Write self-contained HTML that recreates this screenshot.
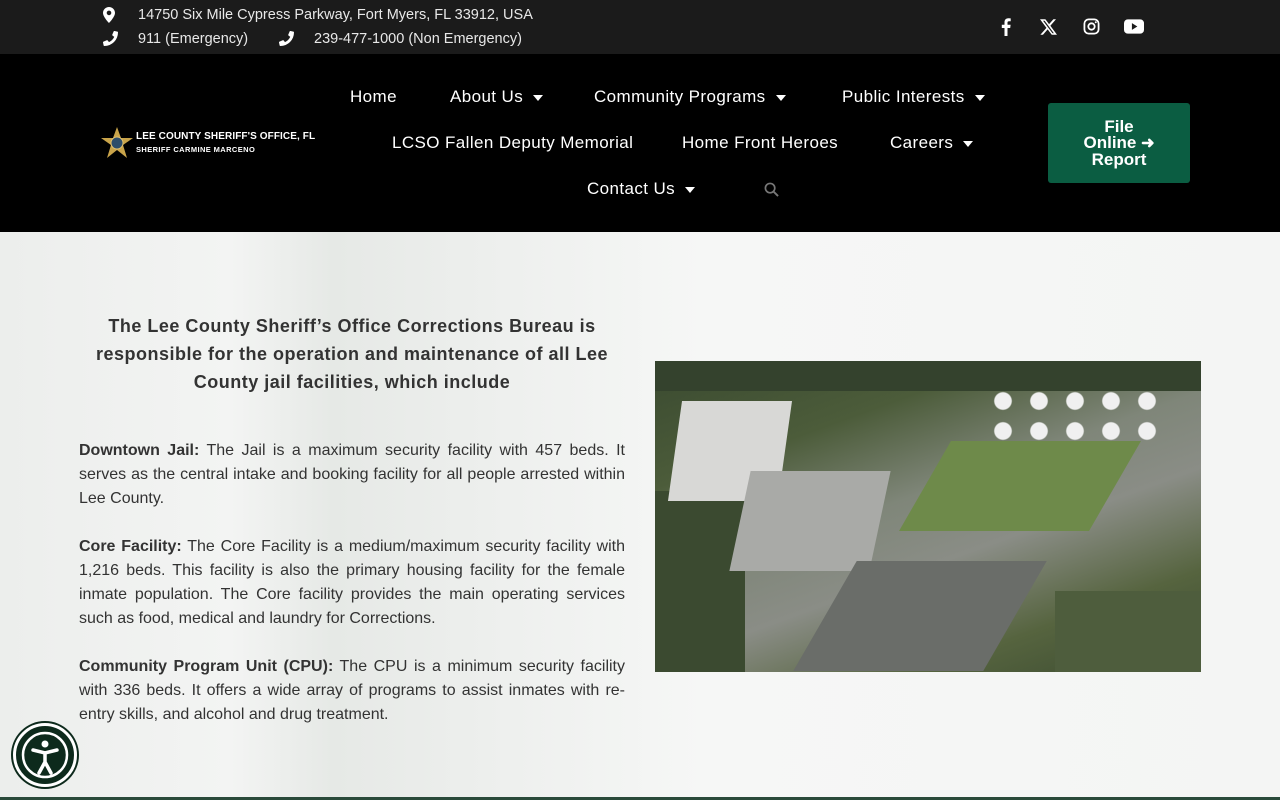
<!DOCTYPE html>
<html><head><meta charset="utf-8"><style>
*{margin:0;padding:0;box-sizing:border-box}
body{width:1280px;height:800px;overflow:hidden;font-family:"Liberation Sans",Arial,sans-serif;background:#f4f5f4;position:relative}
.top{position:absolute;left:0;top:0;width:1280px;height:54px;background:#1b1b1b;color:#e8e8e8;font-size:14.5px}
.top .t{position:absolute;white-space:nowrap}
.nav{position:absolute;left:0;top:54px;width:1280px;height:178px;background:#000;color:#fff;font-size:17px;letter-spacing:.4px}
.nav .i{position:absolute;white-space:nowrap}
.car{display:inline-block;width:0;height:0;border-left:5px solid transparent;border-right:5px solid transparent;border-top:6px solid #fff;margin-left:10px;vertical-align:middle}
.btn{position:absolute;left:1048px;top:103px;width:142px;height:80px;background:#0b5d42;border-radius:3px;color:#fff;font-size:17px;font-weight:bold;line-height:16px;text-align:center;padding-top:16px}
.bg{position:absolute;left:0;top:232px;width:1280px;height:568px;background:linear-gradient(90deg,#eceeec 0%,#f3f4f3 18%,#e6e9e6 26%,#eceeec 36%,#f6f7f6 55%,#f4f5f4 100%)}
h2{position:absolute;left:79px;top:312px;width:546px;text-align:center;font-size:18px;font-weight:bold;line-height:28px;color:#333;letter-spacing:.5px}
.p{position:absolute;left:79px;width:546px;font-size:16px;line-height:24px;color:#333;text-align:justify}
.photo{position:absolute;left:655px;top:361px;width:546px;height:311px;background:linear-gradient(160deg,#3a4a30 0%,#4c5c3a 25%,#7f8679 45%,#8a8d86 60%,#56643f 80%,#3a4a30 100%);overflow:hidden}
.acc{position:absolute;left:13px;top:723px;width:64px;height:64px;border-radius:50%;background:#0d2a1c;border:3px solid #fff;box-shadow:0 0 0 2px #0d2a1c}
</style></head><body>
<div class="top">
<svg style="position:absolute;left:103px;top:7px" width="12" height="16" viewBox="0 0 12 16"><path d="M6 0C2.7 0 0 2.6 0 5.9 0 10 6 16 6 16s6-6 6-10.1C12 2.6 9.3 0 6 0zm0 8.2A2.3 2.3 0 1 1 6 3.6a2.3 2.3 0 0 1 0 4.6z" fill="#fff"/></svg>
<div class="t" style="left:138px;top:7px">14750 Six Mile Cypress Parkway, Fort Myers, FL 33912, USA</div>
<svg style="position:absolute;left:103px;top:31px" width="15" height="15" viewBox="0 0 16 16"><path d="M15.5 11.3l-3.5-1.5a.8.8 0 0 0-.9.2l-1.5 1.9A11.6 11.6 0 0 1 4 6.3l1.9-1.5a.8.8 0 0 0 .2-.9L4.6.4A.8.8 0 0 0 3.7 0L.6.7A.8.8 0 0 0 0 1.5 14.5 14.5 0 0 0 14.5 16a.8.8 0 0 0 .8-.6l.7-3.2a.8.8 0 0 0-.5-.9z" fill="#fff" transform="scale(-1,1) translate(-16,0)"/></svg>
<div class="t" style="left:138px;top:31px">911 (Emergency)</div>
<svg style="position:absolute;left:279px;top:31px" width="15" height="15" viewBox="0 0 16 16"><path d="M15.5 11.3l-3.5-1.5a.8.8 0 0 0-.9.2l-1.5 1.9A11.6 11.6 0 0 1 4 6.3l1.9-1.5a.8.8 0 0 0 .2-.9L4.6.4A.8.8 0 0 0 3.7 0L.6.7A.8.8 0 0 0 0 1.5 14.5 14.5 0 0 0 14.5 16a.8.8 0 0 0 .8-.6l.7-3.2a.8.8 0 0 0-.5-.9z" fill="#fff" transform="scale(-1,1) translate(-16,0)"/></svg>
<div class="t" style="left:314px;top:31px">239-477-1000 (Non Emergency)</div>
<svg style="position:absolute;left:1000px;top:18px" width="12" height="18" viewBox="0 0 10 18"><path d="M6.5 18V10h2.7l.4-3.2H6.5V4.8c0-.9.3-1.5 1.6-1.5H9.7V.4A21 21 0 0 0 7.4.3C5.1.3 3.5 1.7 3.5 4.3v2.5H.8V10h2.7v8z" fill="#fff"/></svg>
<svg style="position:absolute;left:1040px;top:19px" width="17" height="16" viewBox="0 0 24 22"><path d="M18.9 0h3.7l-8 9.2L24 22h-7.4l-5.8-7.6L4.2 22H.5l8.6-9.8L0 0h7.6l5.2 6.9zm-1.3 19.8h2L6.5 2.1H4.3z" fill="#fff"/></svg>
<svg style="position:absolute;left:1083px;top:18px" width="17" height="17" viewBox="0 0 24 24"><rect x="2" y="2" width="20" height="20" rx="6" fill="none" stroke="#fff" stroke-width="2.5"/><circle cx="12" cy="12" r="4.5" fill="none" stroke="#fff" stroke-width="2.5"/><circle cx="18" cy="6" r="1.4" fill="#fff"/></svg>
<svg style="position:absolute;left:1124px;top:19px" width="20" height="15" viewBox="0 0 24 17"><rect x="0" y="0" width="24" height="17" rx="4.5" fill="#fff"/><path d="M9.5 4.5v8l6.5-4z" fill="#1b1b1b"/></svg>
</div>
<div class="nav">
<svg style="position:absolute;left:100px;top:72px" width="34" height="34" viewBox="0 0 34 34"><polygon points="17,1 21,12 33,12 23,19 27,32 17,24 7,32 11,19 1,12 13,12" fill="#c9a44a"/><circle cx="17" cy="17" r="6" fill="#2d4d6a" stroke="#e0c070"/></svg>
<div class="i" style="left:136px;top:77px;font-size:10px;font-weight:bold;letter-spacing:.1px">LEE COUNTY SHERIFF'S OFFICE, FL</div>
<div class="i" style="left:136px;top:91px;font-size:7.5px;font-weight:bold;letter-spacing:.4px">SHERIFF CARMINE MARCENO</div>
<div class="i" style="left:350px;top:33px">Home</div>
<div class="i" style="left:450px;top:33px">About Us<span class="car"></span></div>
<div class="i" style="left:594px;top:33px">Community Programs<span class="car"></span></div>
<div class="i" style="left:842px;top:33px">Public Interests<span class="car"></span></div>
<div class="i" style="left:392px;top:79px">LCSO Fallen Deputy Memorial</div>
<div class="i" style="left:682px;top:79px">Home Front Heroes</div>
<div class="i" style="left:890px;top:79px">Careers<span class="car"></span></div>
<div class="i" style="left:587px;top:125px">Contact Us<span class="car"></span></div>
<svg style="position:absolute;left:764px;top:128px" width="15" height="15" viewBox="0 0 16 16"><circle cx="6.5" cy="6.5" r="5" fill="none" stroke="#777" stroke-width="1.8"/><path d="M10.3 10.3L15 15" stroke="#777" stroke-width="2"/></svg>
</div>
<div class="btn">File<br>Online <span style="font-size:16px">&#10140;</span><br>Report</div>
<div class="bg">
<div style="position:absolute;left:0;top:565px;width:1280px;height:3px;background:#2a4a3a"></div>
</div>
<h2>The Lee County Sheriff’s Office Corrections Bureau is responsible for the operation and maintenance of all Lee County jail facilities, which include</h2>
<div class="p" style="top:439px"><b>Downtown Jail:</b> The Jail is a maximum security facility with 457 beds. It serves as the central intake and booking facility for all people arrested within Lee County.</div>
<div class="p" style="top:535px"><b>Core Facility:</b> The Core Facility is a medium/maximum security facility with 1,216 beds. This facility is also the primary housing facility for the female inmate population. The Core facility provides the main operating services such as food, medical and laundry for Corrections.</div>
<div class="p" style="top:655px"><b>Community Program Unit (CPU):</b> The CPU is a minimum security facility with 336 beds. It offers a wide array of programs to assist inmates with re-entry skills, and alcohol and drug treatment.</div>
<div class="photo">
<div style="position:absolute;left:0;top:0;width:546px;height:30px;background:#34422d"></div>
<div style="position:absolute;left:0;top:130px;width:90px;height:181px;background:#3b4a30"></div>
<div style="position:absolute;left:20px;top:40px;width:110px;height:100px;background:#d8d8d6;transform:skewX(-8deg)"></div>
<div style="position:absolute;left:85px;top:110px;width:140px;height:100px;background:#a9aaa7;transform:skewX(-12deg)"></div>
<div style="position:absolute;left:270px;top:80px;width:190px;height:90px;background:#6e8a4a;transform:skewX(-30deg)"></div>
<div style="position:absolute;left:330px;top:25px;width:180px;height:60px;background:radial-gradient(circle,#f0f0f0 35%,transparent 40%) 0 0/36px 30px"></div>
<div style="position:absolute;left:170px;top:200px;width:190px;height:110px;background:#6a6d69;transform:skewX(-30deg)"></div>
<div style="position:absolute;left:400px;top:230px;width:146px;height:81px;background:#4e5d3d"></div>
</div>
<div class="acc"><svg width="58" height="58" viewBox="0 0 58 58"><circle cx="29" cy="29" r="22" fill="none" stroke="#fff" stroke-width="2.5"/><circle cx="29" cy="18" r="3.5" fill="#fff"/><path d="M17 24l12 3 12-3M29 27v9l-6 11M29 36l6 11" stroke="#fff" stroke-width="3.5" fill="none" stroke-linecap="round"/></svg></div>
</body></html>
